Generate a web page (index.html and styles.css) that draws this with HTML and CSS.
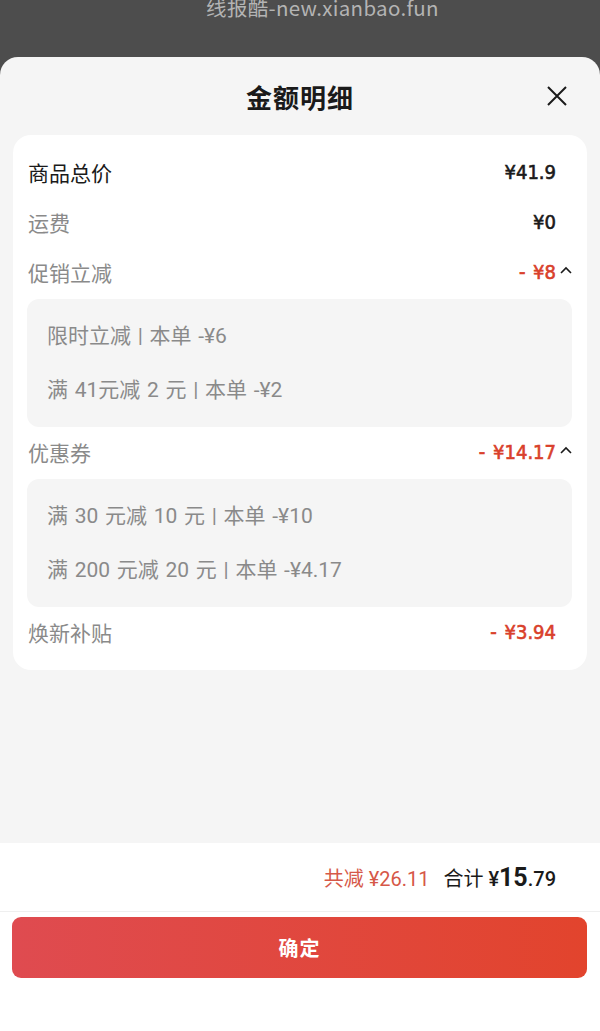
FILE: index.html
```html
<!DOCTYPE html>
<html lang="zh-CN">
<head>
    <meta charset="utf-8" />
    <title>金额明细</title>
    <link rel="stylesheet" href="styles.css">
</head>
<body>
    <div class="mask">
        <div class="watermark">线报酷-new.xianbao.fun</div>
    </div>
    <div class="sheet">
        <div class="sheet-head">
            <h2>金额明细</h2>
            <svg class="close" width="20" height="20" viewBox="0 0 20 20">
                <path d="M1 1 L19 19 M19 1 L1 19" stroke="#1a1a1a" stroke-width="2" fill="none" />
            </svg>
        </div>
        <div class="card">
            <div class="row">
                <span class="label dark">商品总价</span>
                <span class="value">¥41.9</span>
            </div>
            <div class="row">
                <span class="label">运费</span>
                <span class="value">¥0</span>
            </div>
            <div class="row">
                <span class="label">促销立减</span>
                <span class="value red">- ¥8<svg class="arrow" width="12" height="8" viewBox="0 0 12 8"><path d="M1 7 L6 2 L11 7" stroke="#1a1a1a" stroke-width="1.6" fill="none" /></svg></span>
            </div>
            <div class="sub">
                <div class="sub-item">限时立减 | 本单 -¥6</div>
                <div class="sub-item">满 41元减 2 元 | 本单 -¥2</div>
            </div>
            <div class="row">
                <span class="label">优惠券</span>
                <span class="value red">- ¥14.17<svg class="arrow" width="12" height="8" viewBox="0 0 12 8"><path d="M1 7 L6 2 L11 7" stroke="#1a1a1a" stroke-width="1.6" fill="none" /></svg></span>
            </div>
            <div class="sub">
                <div class="sub-item">满 30 元减 10 元 | 本单 -¥10</div>
                <div class="sub-item">满 200 元减 20 元 | 本单 -¥4.17</div>
            </div>
            <div class="row">
                <span class="label">焕新补贴</span>
                <span class="value red">- ¥3.94</span>
            </div>
        </div>
        <div class="spacer"></div>
        <div class="footer">
            <div class="total">
                <span class="saved">共减 ¥26.11</span>
                <span class="sum">合计 <b>¥<em>15</em>.79</b></span>
            </div>
            <div class="btn-wrap">
                <button class="confirm">确定</button>
            </div>
        </div>
    </div>
</body>
</html>
```

FILE: styles.css
```css
html, body { margin:0; padding:0; }
body { width:600px; height:1031px; background:#4d4d4d; font-family:"Roboto", "Noto Sans CJK SC", sans-serif; overflow:hidden; display:flex; flex-direction:column; }
.mask { height:57px; flex:none; overflow:hidden; }
.watermark { text-align:center; color:#b4b4b4; font-size:20.5px; line-height:22px; margin-top:-4px; padding-left:45px; font-family:"Noto Sans CJK SC", "Noto Sans", sans-serif; letter-spacing:0.3px; }
.sheet { flex:1; background:#f5f5f5; border-radius:18px 18px 0 0; display:flex; flex-direction:column; }
.sheet-head { height:78px; position:relative; display:flex; align-items:center; justify-content:center; }
.sheet-head h2 { margin:0; font-family:"Noto Sans CJK SC", sans-serif; font-size:26px; font-weight:700; color:#1a1a1a; letter-spacing:1px; }
.close { position:absolute; right:33px; top:29px; }
.card { background:#fff; margin:0 13px; border-radius:18px; padding:12px 0 13px; }
.row { height:50px; display:flex; align-items:center; justify-content:space-between; padding:0 31px 0 15px; }
.label { font-size:21px; color:#8a8a8a; }
.label.dark { color:#1a1a1a; }
.value { font-family:"DejaVu Sans Condensed", "DejaVu Sans", sans-serif; font-size:20px; color:#1a1a1a; -webkit-text-stroke:0.6px #1a1a1a; position:relative; }
.value.red { color:#d9402b; -webkit-text-stroke:0.6px #d9402b; word-spacing:2px; }
.arrow { position:absolute; right:-16px; top:6px; }
.sub { background:#f5f5f5; margin:2px 15px 0 14px; border-radius:12px; padding:10px 20px; }
.sub-item { height:54px; line-height:54px; font-size:21px; color:#8a8a8a; word-spacing:1.5px; }
.spacer { flex:1; }
.footer { background:#fff; height:188px; flex:none; }
.total { height:68px; border-bottom:1px solid #efefef; display:flex; justify-content:flex-end; align-items:center; padding-right:44px; gap:14px; }
.saved { color:#d65848; font-size:20px; }
.sum { color:#1a1a1a; font-size:20px; }
.sum b { font-weight:500; }
.sum em { font-style:normal; font-size:25px; font-weight:700; }
.btn-wrap { padding:5px 13px 0 12px; }
.confirm { width:100%; height:61px; border:none; border-radius:9px; background:linear-gradient(90deg, #df4b50, #e2442d); color:#fff; font-family:"Noto Sans CJK SC", sans-serif; font-size:20px; font-weight:700; letter-spacing:1px; }
```
